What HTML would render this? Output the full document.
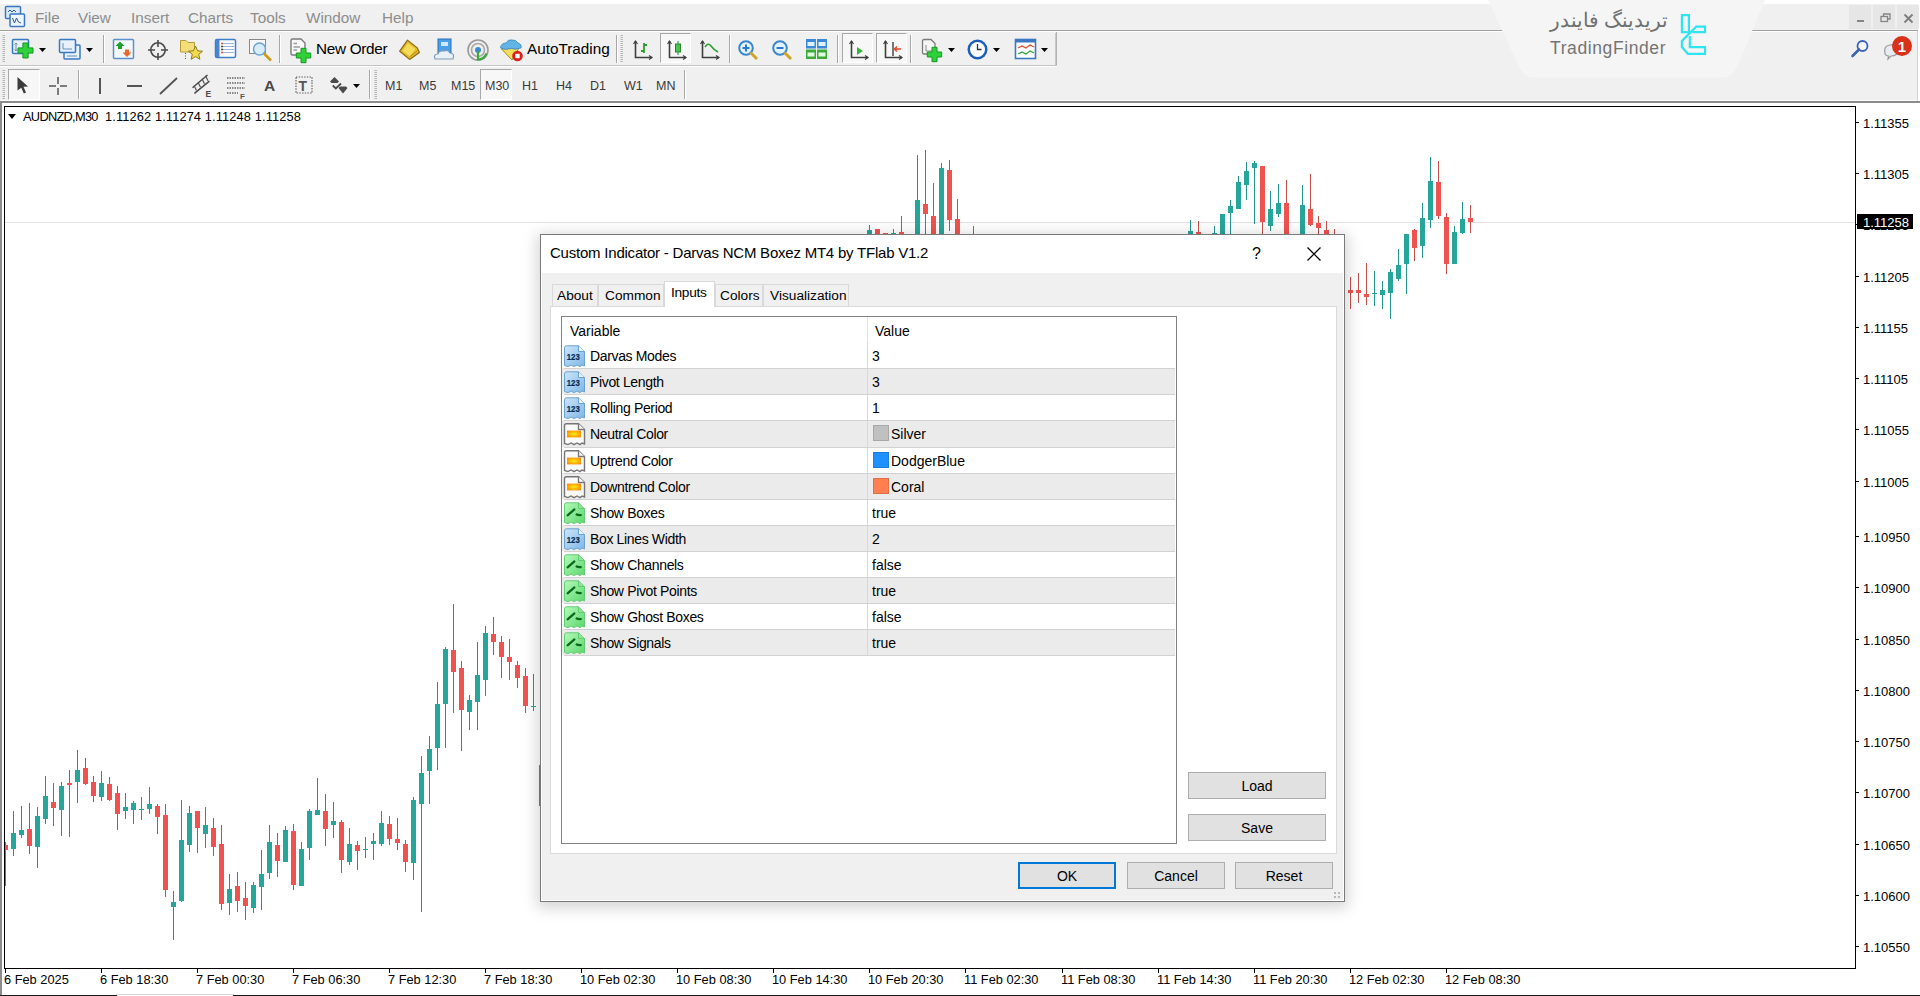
<!DOCTYPE html><html><head><meta charset="utf-8"><style>
*{margin:0;padding:0;box-sizing:border-box}
html,body{width:1920px;height:996px;overflow:hidden;background:#f0f0f0;font-family:"Liberation Sans", sans-serif;position:relative}
.a{position:absolute}
.t{position:absolute;white-space:nowrap;line-height:1}
</style></head><body>
<div class="a" style="left:0;top:0;width:1920px;height:4px;background:#fff"></div>
<div class="a" style="left:0;top:30px;width:1920px;height:1px;background:#a0a0a0"></div>
<div class="a" style="left:1056px;top:31px;width:1px;height:35px;background:#b4b4b4"></div>
<div class="a" style="left:0;top:31px;width:1920px;height:1px;background:#fff"></div>
<div class="a" style="left:0;top:65px;width:1057px;height:1px;background:#c4c4c4"></div>
<div class="a" style="left:0;top:66px;width:1057px;height:1px;background:#fff"></div>
<div class="a" style="left:0;top:100px;width:1920px;height:1px;background:#fafafa"></div>
<div class="a" style="left:0;top:101px;width:1920px;height:2px;background:#8c8c8c"></div>
<div class="a" style="left:0;top:103px;width:1920px;height:893px;background:#fff"></div>
<div class="a" style="left:0;top:101px;width:2px;height:895px;background:#8c8c8c"></div>
<div class="a" style="left:1917px;top:31px;width:1px;height:70px;background:#d4d4d4"></div>
<div class="a" style="left:1918px;top:0;width:2px;height:101px;background:#fff"></div>
<div class="a" style="left:0;top:995px;width:1920px;height:1px;background:#1a1a1a"></div>
<div class="a" style="left:116px;top:994px;width:118px;height:1px;background:#d8d8d8"></div>
<div class="a" style="left:117px;top:995px;width:116px;height:1px;background:#fafafa"></div>
<div class="a" style="left:4px;top:106px;width:1852px;height:863px;border:1px solid #000"></div>
<div class="a" style="left:5px;top:222px;width:1850px;height:1px;background:#e2e2e2"></div>
<div class="t" style="left:35px;top:10px;font-size:15.3px;color:#8d8d8d;">File</div>
<div class="t" style="left:78px;top:10px;font-size:15.3px;color:#8d8d8d;">View</div>
<div class="t" style="left:131px;top:10px;font-size:15.3px;color:#8d8d8d;">Insert</div>
<div class="t" style="left:188px;top:10px;font-size:15.3px;color:#8d8d8d;">Charts</div>
<div class="t" style="left:250px;top:10px;font-size:15.3px;color:#8d8d8d;">Tools</div>
<div class="t" style="left:306px;top:10px;font-size:15.3px;color:#8d8d8d;">Window</div>
<div class="t" style="left:382px;top:10px;font-size:15.3px;color:#8d8d8d;">Help</div>
<div class="a" style="left:8px;top:114px;width:0;height:0;border-left:4.5px solid transparent;border-right:4.5px solid transparent;border-top:5.5px solid #000"></div>
<div class="t" style="left:23px;top:111px;font-size:12.8px;color:#000;letter-spacing:-0.7px">AUDNZD,M30</div>
<div class="t" style="left:105px;top:111px;font-size:12.8px;color:#000;letter-spacing:0.13px">1.11262 1.11274 1.11248 1.11258</div>
<div class="a" style="left:1856px;top:122px;width:3px;height:1px;background:#000"></div>
<div class="t" style="left:1863px;top:117px;font-size:13px;color:#000;">1.11355</div>
<div class="a" style="left:1856px;top:173px;width:3px;height:1px;background:#000"></div>
<div class="t" style="left:1863px;top:168px;font-size:13px;color:#000;">1.11305</div>
<div class="a" style="left:1856px;top:224px;width:3px;height:1px;background:#000"></div>
<div class="a" style="left:1856px;top:276px;width:3px;height:1px;background:#000"></div>
<div class="t" style="left:1863px;top:271px;font-size:13px;color:#000;">1.11205</div>
<div class="a" style="left:1856px;top:327px;width:3px;height:1px;background:#000"></div>
<div class="t" style="left:1863px;top:322px;font-size:13px;color:#000;">1.11155</div>
<div class="a" style="left:1856px;top:378px;width:3px;height:1px;background:#000"></div>
<div class="t" style="left:1863px;top:373px;font-size:13px;color:#000;">1.11105</div>
<div class="a" style="left:1856px;top:429px;width:3px;height:1px;background:#000"></div>
<div class="t" style="left:1863px;top:424px;font-size:13px;color:#000;">1.11055</div>
<div class="a" style="left:1856px;top:481px;width:3px;height:1px;background:#000"></div>
<div class="t" style="left:1863px;top:476px;font-size:13px;color:#000;">1.11005</div>
<div class="a" style="left:1856px;top:536px;width:3px;height:1px;background:#000"></div>
<div class="t" style="left:1863px;top:531px;font-size:13px;color:#000;">1.10950</div>
<div class="a" style="left:1856px;top:587px;width:3px;height:1px;background:#000"></div>
<div class="t" style="left:1863px;top:582px;font-size:13px;color:#000;">1.10900</div>
<div class="a" style="left:1856px;top:639px;width:3px;height:1px;background:#000"></div>
<div class="t" style="left:1863px;top:634px;font-size:13px;color:#000;">1.10850</div>
<div class="a" style="left:1856px;top:690px;width:3px;height:1px;background:#000"></div>
<div class="t" style="left:1863px;top:685px;font-size:13px;color:#000;">1.10800</div>
<div class="a" style="left:1856px;top:741px;width:3px;height:1px;background:#000"></div>
<div class="t" style="left:1863px;top:736px;font-size:13px;color:#000;">1.10750</div>
<div class="a" style="left:1856px;top:792px;width:3px;height:1px;background:#000"></div>
<div class="t" style="left:1863px;top:787px;font-size:13px;color:#000;">1.10700</div>
<div class="a" style="left:1856px;top:844px;width:3px;height:1px;background:#000"></div>
<div class="t" style="left:1863px;top:839px;font-size:13px;color:#000;">1.10650</div>
<div class="a" style="left:1856px;top:895px;width:3px;height:1px;background:#000"></div>
<div class="t" style="left:1863px;top:890px;font-size:13px;color:#000;">1.10600</div>
<div class="a" style="left:1856px;top:946px;width:3px;height:1px;background:#000"></div>
<div class="t" style="left:1863px;top:941px;font-size:13px;color:#000;">1.10550</div>
<div class="t" style="left:1863px;top:219px;font-size:13px;color:#000;">1.11255</div>
<div class="a" style="left:1857px;top:214px;width:56px;height:15px;background:#000"></div>
<div class="t" style="left:1863px;top:216px;font-size:13px;color:#fff;">1.11258</div>
<div class="a" style="left:5px;top:969px;width:1px;height:4px;background:#000"></div>
<div class="t" style="left:4px;top:974px;font-size:12.8px;color:#000;">6 Feb 2025</div>
<div class="a" style="left:101px;top:969px;width:1px;height:4px;background:#000"></div>
<div class="t" style="left:100px;top:974px;font-size:12.8px;color:#000;">6 Feb 18:30</div>
<div class="a" style="left:197px;top:969px;width:1px;height:4px;background:#000"></div>
<div class="t" style="left:196px;top:974px;font-size:12.8px;color:#000;">7 Feb 00:30</div>
<div class="a" style="left:293px;top:969px;width:1px;height:4px;background:#000"></div>
<div class="t" style="left:292px;top:974px;font-size:12.8px;color:#000;">7 Feb 06:30</div>
<div class="a" style="left:389px;top:969px;width:1px;height:4px;background:#000"></div>
<div class="t" style="left:388px;top:974px;font-size:12.8px;color:#000;">7 Feb 12:30</div>
<div class="a" style="left:485px;top:969px;width:1px;height:4px;background:#000"></div>
<div class="t" style="left:484px;top:974px;font-size:12.8px;color:#000;">7 Feb 18:30</div>
<div class="a" style="left:581px;top:969px;width:1px;height:4px;background:#000"></div>
<div class="t" style="left:580px;top:974px;font-size:12.8px;color:#000;">10 Feb 02:30</div>
<div class="a" style="left:677px;top:969px;width:1px;height:4px;background:#000"></div>
<div class="t" style="left:676px;top:974px;font-size:12.8px;color:#000;">10 Feb 08:30</div>
<div class="a" style="left:773px;top:969px;width:1px;height:4px;background:#000"></div>
<div class="t" style="left:772px;top:974px;font-size:12.8px;color:#000;">10 Feb 14:30</div>
<div class="a" style="left:869px;top:969px;width:1px;height:4px;background:#000"></div>
<div class="t" style="left:868px;top:974px;font-size:12.8px;color:#000;">10 Feb 20:30</div>
<div class="a" style="left:965px;top:969px;width:1px;height:4px;background:#000"></div>
<div class="t" style="left:964px;top:974px;font-size:12.8px;color:#000;">11 Feb 02:30</div>
<div class="a" style="left:1062px;top:969px;width:1px;height:4px;background:#000"></div>
<div class="t" style="left:1061px;top:974px;font-size:12.8px;color:#000;">11 Feb 08:30</div>
<div class="a" style="left:1158px;top:969px;width:1px;height:4px;background:#000"></div>
<div class="t" style="left:1157px;top:974px;font-size:12.8px;color:#000;">11 Feb 14:30</div>
<div class="a" style="left:1254px;top:969px;width:1px;height:4px;background:#000"></div>
<div class="t" style="left:1253px;top:974px;font-size:12.8px;color:#000;">11 Feb 20:30</div>
<div class="a" style="left:1350px;top:969px;width:1px;height:4px;background:#000"></div>
<div class="t" style="left:1349px;top:974px;font-size:12.8px;color:#000;">12 Feb 02:30</div>
<div class="a" style="left:1446px;top:969px;width:1px;height:4px;background:#000"></div>
<div class="t" style="left:1445px;top:974px;font-size:12.8px;color:#000;">12 Feb 08:30</div>
<div class="a" style="left:5px;top:107px;width:1850px;height:861px;overflow:hidden"><svg class="a" style="left:-5px;top:-107px" width="1920" height="996" shape-rendering="crispEdges"><rect x="5" y="842" width="1" height="44" fill="#c44f4a"/>
<rect x="3" y="845" width="5" height="5" fill="#ef5350"/>
<rect x="13" y="811" width="1" height="45" fill="#23968c"/>
<rect x="11" y="833" width="5" height="16" fill="#26a69a"/>
<rect x="21" y="806" width="1" height="32" fill="#23968c"/>
<rect x="19" y="830" width="5" height="5" fill="#26a69a"/>
<rect x="29" y="803" width="1" height="51" fill="#c44f4a"/>
<rect x="27" y="829" width="5" height="17" fill="#ef5350"/>
<rect x="37" y="807" width="1" height="61" fill="#23968c"/>
<rect x="35" y="816" width="5" height="31" fill="#26a69a"/>
<rect x="45" y="776" width="1" height="48" fill="#23968c"/>
<rect x="43" y="796" width="5" height="23" fill="#26a69a"/>
<rect x="53" y="783" width="1" height="43" fill="#c44f4a"/>
<rect x="51" y="802" width="5" height="6" fill="#ef5350"/>
<rect x="61" y="782" width="1" height="54" fill="#23968c"/>
<rect x="59" y="786" width="5" height="24" fill="#26a69a"/>
<rect x="69" y="770" width="1" height="67" fill="#c44f4a"/>
<rect x="67" y="783" width="5" height="2" fill="#ef5350"/>
<rect x="77" y="750" width="1" height="53" fill="#23968c"/>
<rect x="75" y="770" width="5" height="12" fill="#26a69a"/>
<rect x="85" y="758" width="1" height="27" fill="#c44f4a"/>
<rect x="83" y="768" width="5" height="16" fill="#ef5350"/>
<rect x="93" y="776" width="1" height="26" fill="#c44f4a"/>
<rect x="91" y="782" width="5" height="14" fill="#ef5350"/>
<rect x="101" y="771" width="1" height="30" fill="#23968c"/>
<rect x="99" y="783" width="5" height="14" fill="#26a69a"/>
<rect x="109" y="777" width="1" height="24" fill="#c44f4a"/>
<rect x="107" y="784" width="5" height="16" fill="#ef5350"/>
<rect x="117" y="786" width="1" height="44" fill="#c44f4a"/>
<rect x="115" y="793" width="5" height="21" fill="#ef5350"/>
<rect x="125" y="793" width="1" height="26" fill="#23968c"/>
<rect x="123" y="807" width="5" height="4" fill="#26a69a"/>
<rect x="133" y="801" width="1" height="23" fill="#23968c"/>
<rect x="131" y="803" width="5" height="7" fill="#26a69a"/>
<rect x="141" y="797" width="1" height="23" fill="#23968c"/>
<rect x="139" y="809" width="5" height="1" fill="#26a69a"/>
<rect x="149" y="787" width="1" height="27" fill="#23968c"/>
<rect x="147" y="804" width="5" height="5" fill="#26a69a"/>
<rect x="157" y="804" width="1" height="30" fill="#c44f4a"/>
<rect x="155" y="806" width="5" height="11" fill="#ef5350"/>
<rect x="165" y="804" width="1" height="93" fill="#c44f4a"/>
<rect x="163" y="815" width="5" height="75" fill="#ef5350"/>
<rect x="173" y="891" width="1" height="49" fill="#23968c"/>
<rect x="171" y="902" width="5" height="5" fill="#26a69a"/>
<rect x="181" y="800" width="1" height="102" fill="#23968c"/>
<rect x="179" y="840" width="5" height="61" fill="#26a69a"/>
<rect x="189" y="806" width="1" height="46" fill="#23968c"/>
<rect x="187" y="813" width="5" height="32" fill="#26a69a"/>
<rect x="197" y="811" width="1" height="42" fill="#c44f4a"/>
<rect x="195" y="811" width="5" height="17" fill="#ef5350"/>
<rect x="205" y="807" width="1" height="41" fill="#23968c"/>
<rect x="203" y="825" width="5" height="9" fill="#26a69a"/>
<rect x="213" y="818" width="1" height="38" fill="#c44f4a"/>
<rect x="211" y="828" width="5" height="19" fill="#ef5350"/>
<rect x="221" y="825" width="1" height="85" fill="#c44f4a"/>
<rect x="219" y="844" width="5" height="60" fill="#ef5350"/>
<rect x="229" y="874" width="1" height="41" fill="#23968c"/>
<rect x="227" y="889" width="5" height="14" fill="#26a69a"/>
<rect x="237" y="872" width="1" height="40" fill="#c44f4a"/>
<rect x="235" y="886" width="5" height="15" fill="#ef5350"/>
<rect x="245" y="882" width="1" height="38" fill="#c44f4a"/>
<rect x="243" y="898" width="5" height="8" fill="#ef5350"/>
<rect x="253" y="882" width="1" height="31" fill="#23968c"/>
<rect x="251" y="885" width="5" height="23" fill="#26a69a"/>
<rect x="261" y="850" width="1" height="60" fill="#23968c"/>
<rect x="259" y="874" width="5" height="13" fill="#26a69a"/>
<rect x="269" y="825" width="1" height="54" fill="#23968c"/>
<rect x="267" y="842" width="5" height="31" fill="#26a69a"/>
<rect x="277" y="833" width="1" height="44" fill="#c44f4a"/>
<rect x="275" y="845" width="5" height="16" fill="#ef5350"/>
<rect x="285" y="826" width="1" height="36" fill="#23968c"/>
<rect x="283" y="830" width="5" height="32" fill="#26a69a"/>
<rect x="293" y="824" width="1" height="66" fill="#c44f4a"/>
<rect x="291" y="831" width="5" height="54" fill="#ef5350"/>
<rect x="301" y="842" width="1" height="44" fill="#23968c"/>
<rect x="299" y="849" width="5" height="37" fill="#26a69a"/>
<rect x="309" y="809" width="1" height="51" fill="#23968c"/>
<rect x="307" y="811" width="5" height="37" fill="#26a69a"/>
<rect x="317" y="778" width="1" height="37" fill="#23968c"/>
<rect x="315" y="810" width="5" height="5" fill="#26a69a"/>
<rect x="325" y="794" width="1" height="52" fill="#c44f4a"/>
<rect x="323" y="811" width="5" height="18" fill="#ef5350"/>
<rect x="333" y="802" width="1" height="36" fill="#23968c"/>
<rect x="331" y="821" width="5" height="4" fill="#26a69a"/>
<rect x="341" y="820" width="1" height="53" fill="#c44f4a"/>
<rect x="339" y="822" width="5" height="38" fill="#ef5350"/>
<rect x="349" y="828" width="1" height="37" fill="#23968c"/>
<rect x="347" y="844" width="5" height="18" fill="#26a69a"/>
<rect x="357" y="841" width="1" height="29" fill="#c44f4a"/>
<rect x="355" y="845" width="5" height="6" fill="#ef5350"/>
<rect x="365" y="837" width="1" height="21" fill="#23968c"/>
<rect x="363" y="849" width="5" height="1" fill="#26a69a"/>
<rect x="373" y="833" width="1" height="27" fill="#23968c"/>
<rect x="371" y="841" width="5" height="3" fill="#26a69a"/>
<rect x="381" y="811" width="1" height="35" fill="#23968c"/>
<rect x="379" y="823" width="5" height="21" fill="#26a69a"/>
<rect x="389" y="816" width="1" height="29" fill="#c44f4a"/>
<rect x="387" y="824" width="5" height="15" fill="#ef5350"/>
<rect x="397" y="818" width="1" height="32" fill="#c44f4a"/>
<rect x="395" y="839" width="5" height="4" fill="#ef5350"/>
<rect x="405" y="840" width="1" height="32" fill="#c44f4a"/>
<rect x="403" y="844" width="5" height="18" fill="#ef5350"/>
<rect x="413" y="797" width="1" height="83" fill="#23968c"/>
<rect x="411" y="800" width="5" height="63" fill="#26a69a"/>
<rect x="421" y="756" width="1" height="156" fill="#23968c"/>
<rect x="419" y="773" width="5" height="31" fill="#26a69a"/>
<rect x="429" y="736" width="1" height="68" fill="#23968c"/>
<rect x="427" y="749" width="5" height="22" fill="#26a69a"/>
<rect x="437" y="682" width="1" height="88" fill="#23968c"/>
<rect x="435" y="704" width="5" height="44" fill="#26a69a"/>
<rect x="445" y="647" width="1" height="101" fill="#23968c"/>
<rect x="443" y="649" width="5" height="55" fill="#26a69a"/>
<rect x="453" y="604" width="1" height="109" fill="#c44f4a"/>
<rect x="451" y="650" width="5" height="22" fill="#ef5350"/>
<rect x="461" y="661" width="1" height="90" fill="#c44f4a"/>
<rect x="459" y="668" width="5" height="42" fill="#ef5350"/>
<rect x="469" y="695" width="1" height="35" fill="#23968c"/>
<rect x="467" y="700" width="5" height="12" fill="#26a69a"/>
<rect x="477" y="642" width="1" height="88" fill="#23968c"/>
<rect x="475" y="675" width="5" height="27" fill="#26a69a"/>
<rect x="485" y="626" width="1" height="70" fill="#23968c"/>
<rect x="483" y="633" width="5" height="47" fill="#26a69a"/>
<rect x="493" y="617" width="1" height="38" fill="#c44f4a"/>
<rect x="491" y="634" width="5" height="8" fill="#ef5350"/>
<rect x="501" y="636" width="1" height="42" fill="#c44f4a"/>
<rect x="499" y="642" width="5" height="15" fill="#ef5350"/>
<rect x="509" y="639" width="1" height="41" fill="#c44f4a"/>
<rect x="507" y="657" width="5" height="5" fill="#ef5350"/>
<rect x="517" y="661" width="1" height="27" fill="#c44f4a"/>
<rect x="515" y="665" width="5" height="13" fill="#ef5350"/>
<rect x="525" y="668" width="1" height="45" fill="#c44f4a"/>
<rect x="523" y="676" width="5" height="30" fill="#ef5350"/>
<rect x="533" y="674" width="1" height="37" fill="#23968c"/>
<rect x="531" y="706" width="5" height="1" fill="#26a69a"/>
<rect x="541" y="765" width="1" height="41" fill="#23968c"/>
<rect x="539" y="765" width="5" height="41" fill="#26a69a"/>
<rect x="869" y="225" width="1" height="35" fill="#23968c"/>
<rect x="867" y="230" width="5" height="30" fill="#26a69a"/>
<rect x="877" y="229" width="1" height="31" fill="#c44f4a"/>
<rect x="875" y="229" width="5" height="31" fill="#ef5350"/>
<rect x="885" y="233" width="1" height="27" fill="#c44f4a"/>
<rect x="883" y="233" width="5" height="27" fill="#ef5350"/>
<rect x="893" y="229" width="1" height="31" fill="#23968c"/>
<rect x="891" y="233" width="5" height="27" fill="#26a69a"/>
<rect x="901" y="216" width="1" height="44" fill="#c44f4a"/>
<rect x="899" y="232" width="5" height="28" fill="#ef5350"/>
<rect x="917" y="155" width="1" height="105" fill="#23968c"/>
<rect x="915" y="200" width="5" height="60" fill="#26a69a"/>
<rect x="925" y="150" width="1" height="110" fill="#c44f4a"/>
<rect x="923" y="204" width="5" height="10" fill="#ef5350"/>
<rect x="933" y="183" width="1" height="77" fill="#c44f4a"/>
<rect x="931" y="216" width="5" height="44" fill="#ef5350"/>
<rect x="941" y="163" width="1" height="97" fill="#23968c"/>
<rect x="939" y="168" width="5" height="92" fill="#26a69a"/>
<rect x="949" y="160" width="1" height="71" fill="#c44f4a"/>
<rect x="947" y="170" width="5" height="50" fill="#ef5350"/>
<rect x="957" y="199" width="1" height="61" fill="#c44f4a"/>
<rect x="955" y="219" width="5" height="41" fill="#ef5350"/>
<rect x="973" y="226" width="1" height="34" fill="#c44f4a"/>
<rect x="971" y="260" width="5" height="1" fill="#ef5350"/>
<rect x="1190" y="220" width="1" height="40" fill="#23968c"/>
<rect x="1188" y="231" width="5" height="29" fill="#26a69a"/>
<rect x="1198" y="221" width="1" height="39" fill="#c44f4a"/>
<rect x="1196" y="232" width="5" height="28" fill="#ef5350"/>
<rect x="1214" y="226" width="1" height="34" fill="#23968c"/>
<rect x="1212" y="233" width="5" height="27" fill="#26a69a"/>
<rect x="1222" y="214" width="1" height="46" fill="#23968c"/>
<rect x="1220" y="214" width="5" height="46" fill="#26a69a"/>
<rect x="1230" y="200" width="1" height="60" fill="#23968c"/>
<rect x="1228" y="206" width="5" height="7" fill="#26a69a"/>
<rect x="1238" y="176" width="1" height="33" fill="#23968c"/>
<rect x="1236" y="182" width="5" height="27" fill="#26a69a"/>
<rect x="1246" y="162" width="1" height="38" fill="#23968c"/>
<rect x="1244" y="171" width="5" height="14" fill="#26a69a"/>
<rect x="1254" y="161" width="1" height="63" fill="#23968c"/>
<rect x="1252" y="163" width="5" height="5" fill="#26a69a"/>
<rect x="1262" y="166" width="1" height="94" fill="#c44f4a"/>
<rect x="1260" y="166" width="5" height="56" fill="#ef5350"/>
<rect x="1270" y="191" width="1" height="40" fill="#23968c"/>
<rect x="1268" y="209" width="5" height="17" fill="#26a69a"/>
<rect x="1278" y="184" width="1" height="33" fill="#23968c"/>
<rect x="1276" y="203" width="5" height="11" fill="#26a69a"/>
<rect x="1286" y="180" width="1" height="80" fill="#c44f4a"/>
<rect x="1284" y="203" width="5" height="57" fill="#ef5350"/>
<rect x="1302" y="185" width="1" height="75" fill="#23968c"/>
<rect x="1300" y="205" width="5" height="55" fill="#26a69a"/>
<rect x="1310" y="174" width="1" height="52" fill="#c44f4a"/>
<rect x="1308" y="209" width="5" height="16" fill="#ef5350"/>
<rect x="1318" y="216" width="1" height="44" fill="#c44f4a"/>
<rect x="1316" y="223" width="5" height="5" fill="#ef5350"/>
<rect x="1326" y="221" width="1" height="39" fill="#c44f4a"/>
<rect x="1324" y="230" width="5" height="30" fill="#ef5350"/>
<rect x="1334" y="229" width="1" height="31" fill="#c44f4a"/>
<rect x="1332" y="260" width="5" height="1" fill="#ef5350"/>
<rect x="1350" y="277" width="1" height="32" fill="#c44f4a"/>
<rect x="1348" y="290" width="5" height="3" fill="#ef5350"/>
<rect x="1358" y="273" width="1" height="30" fill="#c44f4a"/>
<rect x="1356" y="290" width="5" height="3" fill="#ef5350"/>
<rect x="1366" y="263" width="1" height="42" fill="#c44f4a"/>
<rect x="1364" y="294" width="5" height="3" fill="#ef5350"/>
<rect x="1374" y="271" width="1" height="35" fill="#23968c"/>
<rect x="1372" y="293" width="5" height="1" fill="#26a69a"/>
<rect x="1382" y="281" width="1" height="28" fill="#23968c"/>
<rect x="1380" y="290" width="5" height="5" fill="#26a69a"/>
<rect x="1390" y="269" width="1" height="50" fill="#23968c"/>
<rect x="1388" y="272" width="5" height="21" fill="#26a69a"/>
<rect x="1398" y="249" width="1" height="32" fill="#23968c"/>
<rect x="1396" y="265" width="5" height="14" fill="#26a69a"/>
<rect x="1406" y="234" width="1" height="60" fill="#23968c"/>
<rect x="1404" y="234" width="5" height="30" fill="#26a69a"/>
<rect x="1414" y="229" width="1" height="32" fill="#c44f4a"/>
<rect x="1412" y="230" width="5" height="18" fill="#ef5350"/>
<rect x="1422" y="203" width="1" height="55" fill="#23968c"/>
<rect x="1420" y="218" width="5" height="28" fill="#26a69a"/>
<rect x="1430" y="157" width="1" height="71" fill="#23968c"/>
<rect x="1428" y="181" width="5" height="39" fill="#26a69a"/>
<rect x="1438" y="161" width="1" height="58" fill="#c44f4a"/>
<rect x="1436" y="182" width="5" height="34" fill="#ef5350"/>
<rect x="1446" y="213" width="1" height="61" fill="#c44f4a"/>
<rect x="1444" y="217" width="5" height="47" fill="#ef5350"/>
<rect x="1454" y="226" width="1" height="38" fill="#23968c"/>
<rect x="1452" y="232" width="5" height="32" fill="#26a69a"/>
<rect x="1462" y="202" width="1" height="32" fill="#23968c"/>
<rect x="1460" y="219" width="5" height="14" fill="#26a69a"/>
<rect x="1470" y="205" width="1" height="28" fill="#c44f4a"/>
<rect x="1468" y="218" width="5" height="4" fill="#ef5350"/></svg></div>
<svg class="a" style="left:1488px;top:0" width="280" height="80"><path d="M0 0 L277 0 L252 60 Q246 77.5 234 77.5 L46 77.5 Q34 77.5 28 60 Z" fill="#f5f5f5"/></svg>
<svg class="a" style="left:2px;top:35px" width="3" height="28" viewBox="0 0 3 28"><rect x="0.5" y="0" width="2.5" height="1" fill="#b4b4b4"/><rect x="0.5" y="2" width="2.5" height="1" fill="#b4b4b4"/><rect x="0.5" y="4" width="2.5" height="1" fill="#b4b4b4"/><rect x="0.5" y="6" width="2.5" height="1" fill="#b4b4b4"/><rect x="0.5" y="8" width="2.5" height="1" fill="#b4b4b4"/><rect x="0.5" y="10" width="2.5" height="1" fill="#b4b4b4"/><rect x="0.5" y="12" width="2.5" height="1" fill="#b4b4b4"/><rect x="0.5" y="14" width="2.5" height="1" fill="#b4b4b4"/><rect x="0.5" y="16" width="2.5" height="1" fill="#b4b4b4"/><rect x="0.5" y="18" width="2.5" height="1" fill="#b4b4b4"/><rect x="0.5" y="20" width="2.5" height="1" fill="#b4b4b4"/><rect x="0.5" y="22" width="2.5" height="1" fill="#b4b4b4"/><rect x="0.5" y="24" width="2.5" height="1" fill="#b4b4b4"/><rect x="0.5" y="26" width="2.5" height="1" fill="#b4b4b4"/></svg>
<svg class="a" style="left:11px;top:37px" width="26" height="26" viewBox="0 0 26 26"><rect x="1.5" y="2.5" width="16" height="14" rx="1" fill="#e6f1fb" stroke="#3a78c2" stroke-width="1.5"/><path d="M5 6 V14 M3.5 7.5 L5 6 L6.5 7.5 M3.5 12.5 L5 14 L6.5 12.5" stroke="#6b8db5" stroke-width="1" fill="none"/><path d="M11.9 6.0 H17.1 V10.9 H22.0 V16.1 H17.1 V21.0 H11.9 V16.1 H7.0 V10.9 H11.9 Z" fill="#2fd13a" stroke="#139a1e" stroke-width="1"/></svg>
<svg class="a" style="left:39px;top:48px" width="8" height="5" viewBox="0 0 8 5"><path d="M0 0 L7 0 L3.5 4 Z" fill="#000"/></svg>
<svg class="a" style="left:58px;top:37px" width="26" height="26" viewBox="0 0 26 26"><rect x="6" y="8" width="16" height="14" rx="1" fill="#e6f1fb" stroke="#3a78c2" stroke-width="1.5"/><rect x="1.5" y="2.5" width="16" height="13" rx="1" fill="#e6f1fb" stroke="#3a78c2" stroke-width="1.5"/><path d="M5 6 V12 H14" stroke="#6b8db5" stroke-width="1" fill="none"/><path d="M9 19 H19" stroke="#6b8db5" stroke-width="1"/></svg>
<svg class="a" style="left:86px;top:48px" width="8" height="5" viewBox="0 0 8 5"><path d="M0 0 L7 0 L3.5 4 Z" fill="#000"/></svg>
<div class="a" style="left:103px;top:35px;width:1px;height:28px;background:#a8a8a8"></div><div class="a" style="left:104px;top:35px;width:1px;height:28px;background:#fff"></div>
<svg class="a" style="left:112px;top:37px" width="24" height="24" viewBox="0 0 24 24"><rect x="1.5" y="2.5" width="20" height="19" rx="1" fill="#f4f8fc" stroke="#5b8fd0" stroke-width="1.5"/><path d="M8 4.5 L12.5 9 H10 V12 H6 V9 H3.5 Z" fill="#1fa12a"/><path d="M15 20 L10.5 15.5 H13 V12.5 H17 V15.5 H19.5 Z" fill="#e86a2a"/></svg>
<svg class="a" style="left:147px;top:39px" width="22" height="22" viewBox="0 0 22 22"><circle cx="11" cy="11" r="7.2" fill="none" stroke="#4a4a4a" stroke-width="1.6"/><path d="M11 1 V8 M11 14 V21 M1 11 H8 M14 11 H21" stroke="#4a4a4a" stroke-width="1.6"/></svg>
<svg class="a" style="left:179px;top:37px" width="26" height="26" viewBox="0 0 26 26"><path d="M1.5 3.5 H7 L9 5.5 H15.5 V15 H1.5 Z" fill="#f3de78" stroke="#b39a3a" stroke-width="1"/><path d="M16.5 9 L18.6 13.8 L23.5 14.2 L19.7 17.4 L20.9 22.3 L16.5 19.6 L12.1 22.3 L13.3 17.4 L9.5 14.2 L14.4 13.8 Z" fill="#f2d94e" stroke="#8f7a1e" stroke-width="1"/><path d="M6.5 16 V23" stroke="#555" stroke-width="1" stroke-dasharray="1 1.5"/></svg>
<svg class="a" style="left:214px;top:38px" width="24" height="22" viewBox="0 0 24 22"><rect x="1.5" y="1.5" width="20" height="18" rx="1.5" fill="#fff" stroke="#3f7ecb" stroke-width="1.5"/><rect x="2" y="2" width="3.5" height="17" fill="#4a86d0"/><path d="M8 5.5 H20 M8 8.5 H20 M8 11.5 H20 M8 14.5 H20" stroke="#9cb6d6" stroke-width="1"/><circle cx="8" cy="5.5" r="0.9" fill="#e33"/><circle cx="8" cy="8.5" r="0.9" fill="#333"/><circle cx="8" cy="11.5" r="0.9" fill="#333"/><circle cx="8" cy="14.5" r="0.9" fill="#e33"/></svg>
<svg class="a" style="left:248px;top:37px" width="26" height="26" viewBox="0 0 26 26"><rect x="1.5" y="2.5" width="16" height="14" fill="#f8f8f8" stroke="#888" stroke-width="1"/><circle cx="11.5" cy="12" r="6" fill="#d8ecfa" stroke="#6aa6d8" stroke-width="1.5"/><path d="M16 16.5 L23 23.5" stroke="#c99b1e" stroke-width="2.6"/></svg>
<div class="a" style="left:279px;top:35px;width:1px;height:28px;background:#a8a8a8"></div><div class="a" style="left:280px;top:35px;width:1px;height:28px;background:#fff"></div>
<svg class="a" style="left:289px;top:37px" width="26" height="28" viewBox="0 0 26 28"><path d="M2 3.5 Q2 2 3.5 2 H12 L16 6 V18 H3.5 Q2 18 2 16.5 Z" fill="#f8f8f8" stroke="#7a7a7a" stroke-width="1.4"/><path d="M4.5 6.5 H8 M4.5 10 H11 M4.5 13 H8" stroke="#999" stroke-width="1.3"/><path d="M12.0 11.3 H17.0 V16.0 H21.7 V21.0 H17.0 V25.7 H12.0 V21.0 H7.3 V16.0 H12.0 Z" fill="#2fd13a" stroke="#139a1e" stroke-width="1"/></svg>
<div class="t" style="left:316px;top:41px;font-size:15.3px;color:#000;letter-spacing:-0.3px">New Order</div>
<svg class="a" style="left:398px;top:39px" width="24" height="23" viewBox="0 0 24 23"><path d="M1.7 12.2 L9.5 1.1 L19.3 8.9 L21.4 13.6 L11.6 20.4 Z" fill="#e3b92c" stroke="#8e6a12" stroke-width="1.2" stroke-linejoin="round"/><path d="M4.5 12 L10 4.2 L17.5 10 L12 17.5 Z" fill="#f3dc5a"/><path d="M12 17.5 L19.3 12" stroke="#b88a1c" stroke-width="1"/></svg>
<svg class="a" style="left:432px;top:37px" width="24" height="26" viewBox="0 0 24 26"><rect x="6" y="2" width="13" height="14" fill="#4aa0e8" stroke="#2a6fb8" stroke-width="1"/><rect x="9" y="5" width="7" height="4" fill="#cfe8fb"/><path d="M3 22 Q1 17 6 17 Q7 13 12 14 Q16 12 18 16 Q23 16 21 22 Z" fill="#e8f0f8" stroke="#7e9ab8" stroke-width="1.2"/></svg>
<svg class="a" style="left:466px;top:38px" width="24" height="24" viewBox="0 0 24 24"><circle cx="12" cy="12" r="10" fill="none" stroke="#9a9a9a" stroke-width="1.6"/><circle cx="12" cy="12" r="6.5" fill="none" stroke="#a8a8a8" stroke-width="1.6"/><circle cx="12" cy="12" r="3" fill="#3a8ad8"/><path d="M12 13 V21.5 A9.5 9.5 0 0 0 20.5 15.5" stroke="#3aa83a" stroke-width="2.2" fill="none"/></svg>
<svg class="a" style="left:499px;top:37px" width="26" height="26" viewBox="0 0 26 26"><path d="M2.5 12 L20.5 10 L13 23 Z" fill="#f2de5a" stroke="#a08a2a" stroke-width="1"/><path d="M1.5 11 Q2 6 7 6 Q9 2 13 3 Q17 2.5 19 6 Q23 7 22 11 Q17 13 12 11.5 Q6 13.5 1.5 11 Z" fill="#62b4e6" stroke="#3a86c0" stroke-width="0.8"/><circle cx="18.5" cy="19" r="5.3" fill="#d92020"/><rect x="16.3" y="16.8" width="4.4" height="4.4" fill="#fff"/></svg>
<div class="t" style="left:527px;top:41px;font-size:15.3px;color:#000;">AutoTrading</div>
<div class="a" style="left:616px;top:35px;width:1px;height:28px;background:#a8a8a8"></div><div class="a" style="left:617px;top:35px;width:1px;height:28px;background:#fff"></div>
<svg class="a" style="left:620px;top:35px" width="3" height="28" viewBox="0 0 3 28"><rect x="0.5" y="0" width="2.5" height="1" fill="#b4b4b4"/><rect x="0.5" y="2" width="2.5" height="1" fill="#b4b4b4"/><rect x="0.5" y="4" width="2.5" height="1" fill="#b4b4b4"/><rect x="0.5" y="6" width="2.5" height="1" fill="#b4b4b4"/><rect x="0.5" y="8" width="2.5" height="1" fill="#b4b4b4"/><rect x="0.5" y="10" width="2.5" height="1" fill="#b4b4b4"/><rect x="0.5" y="12" width="2.5" height="1" fill="#b4b4b4"/><rect x="0.5" y="14" width="2.5" height="1" fill="#b4b4b4"/><rect x="0.5" y="16" width="2.5" height="1" fill="#b4b4b4"/><rect x="0.5" y="18" width="2.5" height="1" fill="#b4b4b4"/><rect x="0.5" y="20" width="2.5" height="1" fill="#b4b4b4"/><rect x="0.5" y="22" width="2.5" height="1" fill="#b4b4b4"/><rect x="0.5" y="24" width="2.5" height="1" fill="#b4b4b4"/><rect x="0.5" y="26" width="2.5" height="1" fill="#b4b4b4"/></svg>
<svg class="a" style="left:632px;top:39px" width="22" height="22" viewBox="0 0 22 22"><path d="M3.5 2 V18.5 H20" stroke="#3f3f3f" stroke-width="1.6" fill="none"/><path d="M1.5 5 L3.5 2 L5.5 5" stroke="#3f3f3f" stroke-width="1.2" fill="none"/><path d="M17 16.5 L20 18.5 L17 20.5" stroke="#3f3f3f" stroke-width="1.2" fill="none"/><path d="M12 4 V14 M9 12 H12 M12 6 H15" stroke="#2aa02e" stroke-width="1.8" fill="none"/></svg>
<div class="a" style="left:660px;top:33px;width:31px;height:30px;background:#f7f7f7;border-top:1px solid #a8a8a8;border-left:1px solid #a8a8a8;border-right:1px solid #fff;border-bottom:1px solid #fff"></div>
<svg class="a" style="left:666px;top:39px" width="22" height="22" viewBox="0 0 22 22"><path d="M3.5 2 V18.5 H20" stroke="#3f3f3f" stroke-width="1.6" fill="none"/><path d="M1.5 5 L3.5 2 L5.5 5" stroke="#3f3f3f" stroke-width="1.2" fill="none"/><path d="M17 16.5 L20 18.5 L17 20.5" stroke="#3f3f3f" stroke-width="1.2" fill="none"/><path d="M12 2 V16" stroke="#2a8a2e" stroke-width="1"/><rect x="9.5" y="5" width="5" height="8" fill="#4bc14f" stroke="#2a8a2e" stroke-width="1"/></svg>
<svg class="a" style="left:699px;top:39px" width="22" height="22" viewBox="0 0 22 22"><path d="M3.5 2 V18.5 H20" stroke="#3f3f3f" stroke-width="1.6" fill="none"/><path d="M1.5 5 L3.5 2 L5.5 5" stroke="#3f3f3f" stroke-width="1.2" fill="none"/><path d="M17 16.5 L20 18.5 L17 20.5" stroke="#3f3f3f" stroke-width="1.2" fill="none"/><path d="M6 8 Q9 3 12 7 T19 13" stroke="#2aa02e" stroke-width="1.6" fill="none"/></svg>
<div class="a" style="left:729px;top:35px;width:1px;height:28px;background:#a8a8a8"></div><div class="a" style="left:730px;top:35px;width:1px;height:28px;background:#fff"></div>
<svg class="a" style="left:737px;top:39px" width="22" height="22" viewBox="0 0 22 22"><circle cx="9" cy="9" r="6.8" fill="#e4f2fd" stroke="#3a86d0" stroke-width="2"/><path d="M13.5 13.5 L20 20" stroke="#d2a32a" stroke-width="3"/><path d="M5.5 9 H12.5" stroke="#2a7ad0" stroke-width="2"/><path d="M9 5.5 V12.5" stroke="#2a7ad0" stroke-width="2"/></svg>
<svg class="a" style="left:771px;top:39px" width="22" height="22" viewBox="0 0 22 22"><circle cx="9" cy="9" r="6.8" fill="#e4f2fd" stroke="#3a86d0" stroke-width="2"/><path d="M13.5 13.5 L20 20" stroke="#d2a32a" stroke-width="3"/><path d="M5.5 9 H12.5" stroke="#2a7ad0" stroke-width="2"/></svg>
<svg class="a" style="left:805px;top:38px" width="24" height="22" viewBox="0 0 24 22"><rect x="1" y="1" width="10" height="9.5" fill="#3a8ad8"/><rect x="12" y="1" width="10" height="9.5" fill="#3a8ad8"/><rect x="1" y="11.5" width="10" height="9.5" fill="#3aaa3a"/><rect x="12" y="11.5" width="10" height="9.5" fill="#3aaa3a"/><rect x="2.5" y="4" width="7" height="4" fill="#dff0ff"/><rect x="13.5" y="4" width="7" height="4" fill="#dff0ff"/><rect x="2.5" y="14.5" width="7" height="4" fill="#dff8df"/><rect x="13.5" y="14.5" width="7" height="4" fill="#dff8df"/></svg>
<div class="a" style="left:837px;top:35px;width:1px;height:28px;background:#a8a8a8"></div><div class="a" style="left:838px;top:35px;width:1px;height:28px;background:#fff"></div>
<div class="a" style="left:842px;top:33px;width:31px;height:30px;background:#f7f7f7;border-top:1px solid #a8a8a8;border-left:1px solid #a8a8a8;border-right:1px solid #fff;border-bottom:1px solid #fff"></div>
<svg class="a" style="left:848px;top:39px" width="22" height="22" viewBox="0 0 22 22"><path d="M3.5 2 V18.5 H20" stroke="#3f3f3f" stroke-width="1.6" fill="none"/><path d="M1.5 5 L3.5 2 L5.5 5" stroke="#3f3f3f" stroke-width="1.2" fill="none"/><path d="M17 16.5 L20 18.5 L17 20.5" stroke="#3f3f3f" stroke-width="1.2" fill="none"/><path d="M9 8 L15 12 L9 16 Z" fill="#3ab53e"/></svg>
<div class="a" style="left:876px;top:33px;width:31px;height:30px;background:#f7f7f7;border-top:1px solid #a8a8a8;border-left:1px solid #a8a8a8;border-right:1px solid #fff;border-bottom:1px solid #fff"></div>
<svg class="a" style="left:882px;top:39px" width="22" height="22" viewBox="0 0 22 22"><path d="M3.5 2 V18.5 H20" stroke="#3f3f3f" stroke-width="1.6" fill="none"/><path d="M1.5 5 L3.5 2 L5.5 5" stroke="#3f3f3f" stroke-width="1.2" fill="none"/><path d="M17 16.5 L20 18.5 L17 20.5" stroke="#3f3f3f" stroke-width="1.2" fill="none"/><path d="M11 3 V17" stroke="#3f3f3f" stroke-width="1.4"/><path d="M19 10 H13 M15 7.5 L12.5 10 L15 12.5" stroke="#e04a2a" stroke-width="1.6" fill="none"/></svg>
<div class="a" style="left:910px;top:35px;width:1px;height:28px;background:#a8a8a8"></div><div class="a" style="left:911px;top:35px;width:1px;height:28px;background:#fff"></div>
<svg class="a" style="left:920px;top:37px" width="26" height="26" viewBox="0 0 26 26"><path d="M2.5 4 Q2.5 2.5 4 2.5 H11 L15 6.5 V17 H4 Q2.5 17 2.5 15.5 Z" fill="#f6f6f6" stroke="#7a7a7a" stroke-width="1.3"/><path d="M6 8 V14 H12" stroke="#888" stroke-width="1" fill="none"/><path d="M12.0 10.3 H17.0 V15.0 H21.7 V20.0 H17.0 V24.7 H12.0 V20.0 H7.3 V15.0 H12.0 Z" fill="#2fd13a" stroke="#139a1e" stroke-width="1"/></svg>
<svg class="a" style="left:948px;top:48px" width="8" height="5" viewBox="0 0 8 5"><path d="M0 0 L7 0 L3.5 4 Z" fill="#000"/></svg>
<svg class="a" style="left:966px;top:38px" width="24" height="24" viewBox="0 0 24 24"><circle cx="11.5" cy="11.5" r="10" fill="#1d5fb8"/><circle cx="11.5" cy="11.5" r="7.5" fill="#fff"/><path d="M11.5 6 V11.5 H15.5" stroke="#333" stroke-width="1.3" fill="none"/></svg>
<svg class="a" style="left:993px;top:48px" width="8" height="5" viewBox="0 0 8 5"><path d="M0 0 L7 0 L3.5 4 Z" fill="#000"/></svg>
<svg class="a" style="left:1014px;top:38px" width="24" height="22" viewBox="0 0 24 22"><rect x="1.5" y="1.5" width="20" height="19" fill="#fff" stroke="#3a78c2" stroke-width="1.6"/><rect x="1.5" y="1.5" width="20" height="3" fill="#3a78c2"/><path d="M4 10 L8 8 L12 10 L16 7 L20 9" stroke="#e24a2a" stroke-width="1.2" fill="none"/><path d="M4 16 L8 14 L12 16 L16 13 L20 15" stroke="#2aa83a" stroke-width="1.2" fill="none"/></svg>
<svg class="a" style="left:1041px;top:48px" width="8" height="5" viewBox="0 0 8 5"><path d="M0 0 L7 0 L3.5 4 Z" fill="#000"/></svg>
<div class="a" style="left:1055px;top:33px;width:1px;height:32px;background:#c8c8c8"></div>
<svg class="a" style="left:2px;top:70px" width="3" height="29" viewBox="0 0 3 29"><rect x="0.5" y="0" width="2.5" height="1" fill="#b4b4b4"/><rect x="0.5" y="2" width="2.5" height="1" fill="#b4b4b4"/><rect x="0.5" y="4" width="2.5" height="1" fill="#b4b4b4"/><rect x="0.5" y="6" width="2.5" height="1" fill="#b4b4b4"/><rect x="0.5" y="8" width="2.5" height="1" fill="#b4b4b4"/><rect x="0.5" y="10" width="2.5" height="1" fill="#b4b4b4"/><rect x="0.5" y="12" width="2.5" height="1" fill="#b4b4b4"/><rect x="0.5" y="14" width="2.5" height="1" fill="#b4b4b4"/><rect x="0.5" y="16" width="2.5" height="1" fill="#b4b4b4"/><rect x="0.5" y="18" width="2.5" height="1" fill="#b4b4b4"/><rect x="0.5" y="20" width="2.5" height="1" fill="#b4b4b4"/><rect x="0.5" y="22" width="2.5" height="1" fill="#b4b4b4"/><rect x="0.5" y="24" width="2.5" height="1" fill="#b4b4b4"/><rect x="0.5" y="26" width="2.5" height="1" fill="#b4b4b4"/><rect x="0.5" y="28" width="2.5" height="1" fill="#b4b4b4"/></svg>
<div class="a" style="left:8px;top:69px;width:32px;height:31px;background:#f7f7f7;border-top:1px solid #a8a8a8;border-left:1px solid #a8a8a8;border-right:1px solid #fff;border-bottom:1px solid #fff"></div>
<svg class="a" style="left:16px;top:76px" width="14" height="18" viewBox="0 0 14 18"><path d="M1.5 1 L12 10.5 L7.5 10.8 L10 16.5 L7.8 17.5 L5.3 11.8 L1.5 14.5 Z" fill="#3c3c3c"/></svg>
<svg class="a" style="left:47px;top:75px" width="22" height="22" viewBox="0 0 22 22"><path d="M11 2 V9 M11 13 V20 M2 11 H9 M13 11 H20" stroke="#555" stroke-width="1.5"/></svg>
<div class="a" style="left:78px;top:70px;width:1px;height:29px;background:#a8a8a8"></div><div class="a" style="left:79px;top:70px;width:1px;height:29px;background:#fff"></div>
<svg class="a" style="left:94px;top:75px" width="12" height="22" viewBox="0 0 12 22"><path d="M6 3 V19" stroke="#555" stroke-width="2"/></svg>
<svg class="a" style="left:125px;top:75px" width="20" height="22" viewBox="0 0 20 22"><path d="M2 11 H17" stroke="#555" stroke-width="2"/></svg>
<svg class="a" style="left:158px;top:75px" width="22" height="22" viewBox="0 0 22 22"><path d="M2 19 L19 3" stroke="#555" stroke-width="1.8"/></svg>
<svg class="a" style="left:190px;top:74px" width="26" height="26" viewBox="0 0 26 26"><path d="M2.5 13.7 L17.5 1 M4.4 19.3 L19.4 7.1" stroke="#4a4a4a" stroke-width="1.5"/><path d="M4 11.5 L6.5 16.5 M8 8.2 L10.5 13.2 M12 4.8 L14.5 9.8 M15.5 1.8 L18 6.8" stroke="#555" stroke-width="1.2"/><text x="15.5" y="23" font-family="Liberation Sans" font-weight="bold" font-size="8.5" fill="#4a4a4a">E</text></svg>
<svg class="a" style="left:225px;top:74px" width="26" height="26" viewBox="0 0 26 26"><path d="M2 4 H20 M2 9 H20 M2 14 H20 M2 19 H13" stroke="#666" stroke-width="1.4" stroke-dasharray="1.5 1"/><text x="15" y="25" font-family="Liberation Sans" font-weight="bold" font-size="8" fill="#555">F</text></svg>
<div class="t" style="left:264px;top:78px;font-size:15.5px;color:#4a4a4a;font-weight:bold">A</div>
<svg class="a" style="left:294px;top:75px" width="22" height="22" viewBox="0 0 22 22"><rect x="2" y="2" width="16" height="16" fill="none" stroke="#666" stroke-width="1.2" stroke-dasharray="1.5 1.2"/><text x="4.5" y="16" font-family="Liberation Sans" font-weight="bold" font-size="14" fill="#555">T</text></svg>
<svg class="a" style="left:328px;top:75px" width="22" height="22" viewBox="0 0 22 22"><path d="M2 6.5 L6.5 2 L11 6.5 L9.5 8 L3.5 8 Z" fill="#4a4a4a"/><path d="M4.8 10.5 L7.8 13.5 L13 8.5" stroke="#4a4a4a" stroke-width="1.8" fill="none"/><path d="M10.5 13 L12 11.5 L18 11.5 L19.5 13 L15 18.5 Z" fill="#4a4a4a"/></svg>
<svg class="a" style="left:353px;top:84px" width="8" height="5" viewBox="0 0 8 5"><path d="M0 0 L7 0 L3.5 4 Z" fill="#000"/></svg>
<div class="a" style="left:369px;top:70px;width:1px;height:29px;background:#a8a8a8"></div><div class="a" style="left:370px;top:70px;width:1px;height:29px;background:#fff"></div>
<svg class="a" style="left:374px;top:70px" width="3" height="29" viewBox="0 0 3 29"><rect x="0.5" y="0" width="2.5" height="1" fill="#b4b4b4"/><rect x="0.5" y="2" width="2.5" height="1" fill="#b4b4b4"/><rect x="0.5" y="4" width="2.5" height="1" fill="#b4b4b4"/><rect x="0.5" y="6" width="2.5" height="1" fill="#b4b4b4"/><rect x="0.5" y="8" width="2.5" height="1" fill="#b4b4b4"/><rect x="0.5" y="10" width="2.5" height="1" fill="#b4b4b4"/><rect x="0.5" y="12" width="2.5" height="1" fill="#b4b4b4"/><rect x="0.5" y="14" width="2.5" height="1" fill="#b4b4b4"/><rect x="0.5" y="16" width="2.5" height="1" fill="#b4b4b4"/><rect x="0.5" y="18" width="2.5" height="1" fill="#b4b4b4"/><rect x="0.5" y="20" width="2.5" height="1" fill="#b4b4b4"/><rect x="0.5" y="22" width="2.5" height="1" fill="#b4b4b4"/><rect x="0.5" y="24" width="2.5" height="1" fill="#b4b4b4"/><rect x="0.5" y="26" width="2.5" height="1" fill="#b4b4b4"/><rect x="0.5" y="28" width="2.5" height="1" fill="#b4b4b4"/></svg>
<div class="a" style="left:480px;top:69px;width:32px;height:31px;background:#f7f7f7;border-top:1px solid #a8a8a8;border-left:1px solid #a8a8a8;border-right:1px solid #fff;border-bottom:1px solid #fff"></div>
<div class="t" style="left:385px;top:80px;font-size:12.5px;color:#3a3a3a;">M1</div>
<div class="t" style="left:419px;top:80px;font-size:12.5px;color:#3a3a3a;">M5</div>
<div class="t" style="left:451px;top:80px;font-size:12.5px;color:#3a3a3a;">M15</div>
<div class="t" style="left:485px;top:80px;font-size:12.5px;color:#3a3a3a;">M30</div>
<div class="t" style="left:522px;top:80px;font-size:12.5px;color:#3a3a3a;">H1</div>
<div class="t" style="left:556px;top:80px;font-size:12.5px;color:#3a3a3a;">H4</div>
<div class="t" style="left:590px;top:80px;font-size:12.5px;color:#3a3a3a;">D1</div>
<div class="t" style="left:624px;top:80px;font-size:12.5px;color:#3a3a3a;">W1</div>
<div class="t" style="left:656px;top:80px;font-size:12.5px;color:#3a3a3a;">MN</div>
<div class="a" style="left:684px;top:70px;width:1px;height:29px;background:#a8a8a8"></div><div class="a" style="left:685px;top:70px;width:1px;height:29px;background:#fff"></div>
<div class="a" style="left:1849px;top:5px;width:22px;height:24px;background:#e6e6e6"></div>
<div class="a" style="left:1873px;top:5px;width:22px;height:24px;background:#e6e6e6"></div>
<div class="a" style="left:1897px;top:5px;width:22px;height:24px;background:#e6e6e6"></div>
<div class="a" style="left:1857px;top:20px;width:7px;height:2px;background:#858585"></div>
<svg class="a" style="left:1880px;top:12px" width="12" height="12" viewBox="0 0 12 12"><rect x="1" y="4.5" width="6.5" height="5" fill="none" stroke="#858585" stroke-width="1.3"/><path d="M3.5 4.5 V2 H10 V7 H7.5" fill="none" stroke="#858585" stroke-width="1.3"/></svg>
<svg class="a" style="left:1903px;top:13px" width="11" height="11" viewBox="0 0 11 11"><path d="M1.5 1.5 L9.5 9.5 M9.5 1.5 L1.5 9.5" stroke="#7c7c7c" stroke-width="1.8"/></svg>
<svg class="a" style="left:1850px;top:38px" width="22" height="22" viewBox="0 0 22 22"><circle cx="12.5" cy="8" r="5" fill="#f4f6fb" stroke="#3a62b8" stroke-width="1.8"/><path d="M9 11.5 L2.5 18" stroke="#3a62b8" stroke-width="2.6" stroke-linecap="round"/></svg>
<svg class="a" style="left:1880px;top:32px" width="36" height="30" viewBox="0 0 36 30"><path d="M5 22 Q3 14 10 13 Q17 12 18 18 Q18 24 11 24 L8 27 L8.5 24 Q6 24 5 22 Z" fill="#e6ecf2" stroke="#9a9a9a" stroke-width="1.2"/><circle cx="22" cy="14" r="10" fill="#d93218"/><text x="22" y="19.5" text-anchor="middle" font-family="Liberation Sans" font-weight="bold" font-size="15" fill="#fff">1</text></svg>
<div class="t" style="left:1550px;top:40px;font-size:17.5px;color:#747474;letter-spacing:0.6px">TradingFinder</div>
<div class="t" style="left:1550px;top:11px;font-size:19.5px;color:#707070;">&#1578;&#1585;&#1740;&#1583;&#1740;&#1606;&#1711; &#1601;&#1575;&#1740;&#1606;&#1583;&#1585;</div>
<svg class="a" style="left:1670px;top:5px" width="50" height="60" viewBox="0 0 50 60"><g fill="none" stroke="#2ee4f2" stroke-width="2.2"><rect x="11.9" y="10.1" width="7" height="17.1"/><path d="M22.5 27.2 H35 V21.6 H26.2 L11.9 36 V42 L18 48.9 H35 V42.1 H19.8 V31"/></g></svg>
<svg class="a" style="left:4px;top:5px" width="22" height="23" viewBox="0 0 22 23"><rect x="1.5" y="1.5" width="15" height="12" rx="1" fill="#dceaf8" stroke="#3a78c2" stroke-width="1.5"/><rect x="6" y="9" width="14.5" height="12.5" rx="1" fill="#eef5fc" stroke="#3a78c2" stroke-width="1.5"/><path d="M4 7 L6 5 L8 7 L10 5 L12 7" stroke="#2a5a9a" stroke-width="1" fill="none"/><path d="M8.5 13 L10.5 18 L12.5 13 L14.5 17 L17 18" stroke="#2a5a9a" stroke-width="1" fill="none"/></svg>
<div class="a" style="left:540px;top:234px;width:805px;height:668px;background:#f0f0f0;border:1px solid #7a7a7a;box-shadow:inset 0 0 0 1px #fff, 0 3px 14px 3px rgba(0,0,0,0.17)"></div>
<div class="a" style="left:541px;top:235px;width:803px;height:38px;background:#fff"></div>
<div class="t" style="left:550px;top:245px;font-size:15px;color:#000;letter-spacing:-0.22px">Custom Indicator - Darvas NCM Boxez MT4 by TFlab V1.2</div>
<div class="t" style="left:1252px;top:246px;font-size:16px;color:#000;">?</div>
<svg class="a" style="left:1307px;top:247px" width="14" height="14"><path d="M0.5 0.5 L13.5 13.5 M13.5 0.5 L0.5 13.5" stroke="#000" stroke-width="1.25"/></svg>
<div class="a" style="left:550px;top:306px;width:787px;height:548px;background:#fff;border:1px solid #d9d9d9"></div>
<div class="a" style="left:552px;top:284px;width:46px;height:22px;background:#f0f0f0;border:1px solid #d9d9d9;border-bottom:none"></div>
<div class="t" style="left:557px;top:289px;font-size:13.7px;color:#000;">About</div>
<div class="a" style="left:598px;top:284px;width:66px;height:22px;background:#f0f0f0;border:1px solid #d9d9d9;border-bottom:none"></div>
<div class="t" style="left:605px;top:289px;font-size:13.7px;color:#000;">Common</div>
<div class="a" style="left:664px;top:281px;width:51px;height:26px;background:#fff;border:1px solid #d9d9d9;border-bottom:none"></div>
<div class="t" style="left:671px;top:286px;font-size:13.7px;color:#000;letter-spacing:-0.3px">Inputs</div>
<div class="a" style="left:715px;top:284px;width:48px;height:22px;background:#f0f0f0;border:1px solid #d9d9d9;border-bottom:none"></div>
<div class="t" style="left:720px;top:289px;font-size:13.7px;color:#000;">Colors</div>
<div class="a" style="left:763px;top:284px;width:86px;height:22px;background:#f0f0f0;border:1px solid #d9d9d9;border-bottom:none"></div>
<div class="t" style="left:770px;top:289px;font-size:13.7px;color:#000;">Visualization</div>
<div class="a" style="left:561px;top:316px;width:616px;height:528px;background:#fff;border:1px solid #828282"></div>
<div class="t" style="left:570px;top:324px;font-size:14px;color:#000;">Variable</div>
<div class="t" style="left:875px;top:324px;font-size:14px;color:#000;">Value</div>
<div class="a" style="left:867px;top:317px;width:1px;height:339px;background:#e3e3e3"></div>
<div class="a" style="left:562px;top:342px;width:613px;height:26px;background:#fff"></div>
<div class="a" style="left:867px;top:342px;width:1px;height:26px;background:#d8d8d8"></div>
<svg class="a" style="left:563px;top:345px" width="23" height="23" viewBox="0 0 23 23"><defs><linearGradient id="gb" x1="0" y1="0" x2="1" y2="1"><stop offset="0" stop-color="#cde6fa"/><stop offset="1" stop-color="#7db6e6"/></linearGradient></defs><path d="M1.5 2.8 Q1.5 0.8 3.5 0.8 L15.5 0.8 L21.5 6.5 L21.5 21 L19 20 L17 21.6 L14 20 L11 21.6 L8 20 L5 21.6 L1.5 20.5 Z" fill="url(#gb)" stroke="#6aa2d4" stroke-width="1"/><path d="M15.5 0.8 L15.5 6.5 L21.5 6.5" fill="#e8f4fd" stroke="#6aa2d4" stroke-width="1"/><text transform="translate(3.8 15.2) scale(0.82 1)" font-family="Liberation Sans" font-weight="bold" font-size="9.5" fill="#0b2a52" stroke="#0b2a52" stroke-width="0.2">123</text></svg>
<div class="t" style="left:590px;top:349px;font-size:14px;color:#000;letter-spacing:-0.35px">Darvas Modes</div>
<div class="t" style="left:872px;top:349px;font-size:14px;color:#000;">3</div>
<div class="a" style="left:562px;top:368px;width:613px;height:26px;background:#ebebeb"></div>
<div class="a" style="left:867px;top:368px;width:1px;height:26px;background:#d8d8d8"></div>
<svg class="a" style="left:563px;top:371px" width="23" height="23" viewBox="0 0 23 23"><defs><linearGradient id="gb" x1="0" y1="0" x2="1" y2="1"><stop offset="0" stop-color="#cde6fa"/><stop offset="1" stop-color="#7db6e6"/></linearGradient></defs><path d="M1.5 2.8 Q1.5 0.8 3.5 0.8 L15.5 0.8 L21.5 6.5 L21.5 21 L19 20 L17 21.6 L14 20 L11 21.6 L8 20 L5 21.6 L1.5 20.5 Z" fill="url(#gb)" stroke="#6aa2d4" stroke-width="1"/><path d="M15.5 0.8 L15.5 6.5 L21.5 6.5" fill="#e8f4fd" stroke="#6aa2d4" stroke-width="1"/><text transform="translate(3.8 15.2) scale(0.82 1)" font-family="Liberation Sans" font-weight="bold" font-size="9.5" fill="#0b2a52" stroke="#0b2a52" stroke-width="0.2">123</text></svg>
<div class="t" style="left:590px;top:375px;font-size:14px;color:#000;letter-spacing:-0.35px">Pivot Length</div>
<div class="t" style="left:872px;top:375px;font-size:14px;color:#000;">3</div>
<div class="a" style="left:562px;top:394px;width:613px;height:26px;background:#fff"></div>
<div class="a" style="left:867px;top:394px;width:1px;height:26px;background:#d8d8d8"></div>
<svg class="a" style="left:563px;top:397px" width="23" height="23" viewBox="0 0 23 23"><defs><linearGradient id="gb" x1="0" y1="0" x2="1" y2="1"><stop offset="0" stop-color="#cde6fa"/><stop offset="1" stop-color="#7db6e6"/></linearGradient></defs><path d="M1.5 2.8 Q1.5 0.8 3.5 0.8 L15.5 0.8 L21.5 6.5 L21.5 21 L19 20 L17 21.6 L14 20 L11 21.6 L8 20 L5 21.6 L1.5 20.5 Z" fill="url(#gb)" stroke="#6aa2d4" stroke-width="1"/><path d="M15.5 0.8 L15.5 6.5 L21.5 6.5" fill="#e8f4fd" stroke="#6aa2d4" stroke-width="1"/><text transform="translate(3.8 15.2) scale(0.82 1)" font-family="Liberation Sans" font-weight="bold" font-size="9.5" fill="#0b2a52" stroke="#0b2a52" stroke-width="0.2">123</text></svg>
<div class="t" style="left:590px;top:401px;font-size:14px;color:#000;letter-spacing:-0.35px">Rolling Period</div>
<div class="t" style="left:872px;top:401px;font-size:14px;color:#000;">1</div>
<div class="a" style="left:562px;top:420px;width:613px;height:27px;background:#ebebeb"></div>
<div class="a" style="left:867px;top:420px;width:1px;height:27px;background:#d8d8d8"></div>
<svg class="a" style="left:563px;top:423px" width="23" height="23" viewBox="0 0 23 23"><defs><radialGradient id="go" cx="0.5" cy="0.5" r="0.6"><stop offset="0" stop-color="#ffef10"/><stop offset="1" stop-color="#ff8800"/></radialGradient></defs><path d="M1.5 2.8 Q1.5 0.8 3.5 0.8 L15.5 0.8 L21.5 6.5 L21.5 21 L19 20 L17 21.6 L14 20 L11 21.6 L8 20 L5 21.6 L1.5 20.5 Z" fill="#fafafa" stroke="#767676" stroke-width="1.4"/><path d="M15.5 0.8 L15.5 6.5 L21.5 6.5" fill="#fff" stroke="#767676" stroke-width="1.4"/><rect x="4" y="7.6" width="14" height="6.8" fill="url(#go)"/></svg>
<div class="t" style="left:590px;top:427px;font-size:14px;color:#000;letter-spacing:-0.35px">Neutral Color</div>
<div class="a" style="left:873px;top:425px;width:16px;height:16px;background:#c0c0c0;border:1px solid rgba(0,0,0,0.12)"></div>
<div class="t" style="left:891px;top:427px;font-size:14px;color:#000;">Silver</div>
<div class="a" style="left:562px;top:447px;width:613px;height:26px;background:#fff"></div>
<div class="a" style="left:867px;top:447px;width:1px;height:26px;background:#d8d8d8"></div>
<svg class="a" style="left:563px;top:450px" width="23" height="23" viewBox="0 0 23 23"><defs><radialGradient id="go" cx="0.5" cy="0.5" r="0.6"><stop offset="0" stop-color="#ffef10"/><stop offset="1" stop-color="#ff8800"/></radialGradient></defs><path d="M1.5 2.8 Q1.5 0.8 3.5 0.8 L15.5 0.8 L21.5 6.5 L21.5 21 L19 20 L17 21.6 L14 20 L11 21.6 L8 20 L5 21.6 L1.5 20.5 Z" fill="#fafafa" stroke="#767676" stroke-width="1.4"/><path d="M15.5 0.8 L15.5 6.5 L21.5 6.5" fill="#fff" stroke="#767676" stroke-width="1.4"/><rect x="4" y="7.6" width="14" height="6.8" fill="url(#go)"/></svg>
<div class="t" style="left:590px;top:454px;font-size:14px;color:#000;letter-spacing:-0.35px">Uptrend Color</div>
<div class="a" style="left:873px;top:452px;width:16px;height:16px;background:#1e90ff;border:1px solid rgba(0,0,0,0.12)"></div>
<div class="t" style="left:891px;top:454px;font-size:14px;color:#000;">DodgerBlue</div>
<div class="a" style="left:562px;top:473px;width:613px;height:26px;background:#ebebeb"></div>
<div class="a" style="left:867px;top:473px;width:1px;height:26px;background:#d8d8d8"></div>
<svg class="a" style="left:563px;top:476px" width="23" height="23" viewBox="0 0 23 23"><defs><radialGradient id="go" cx="0.5" cy="0.5" r="0.6"><stop offset="0" stop-color="#ffef10"/><stop offset="1" stop-color="#ff8800"/></radialGradient></defs><path d="M1.5 2.8 Q1.5 0.8 3.5 0.8 L15.5 0.8 L21.5 6.5 L21.5 21 L19 20 L17 21.6 L14 20 L11 21.6 L8 20 L5 21.6 L1.5 20.5 Z" fill="#fafafa" stroke="#767676" stroke-width="1.4"/><path d="M15.5 0.8 L15.5 6.5 L21.5 6.5" fill="#fff" stroke="#767676" stroke-width="1.4"/><rect x="4" y="7.6" width="14" height="6.8" fill="url(#go)"/></svg>
<div class="t" style="left:590px;top:480px;font-size:14px;color:#000;letter-spacing:-0.35px">Downtrend Color</div>
<div class="a" style="left:873px;top:478px;width:16px;height:16px;background:#ff7f50;border:1px solid rgba(0,0,0,0.12)"></div>
<div class="t" style="left:891px;top:480px;font-size:14px;color:#000;">Coral</div>
<div class="a" style="left:562px;top:499px;width:613px;height:26px;background:#fff"></div>
<div class="a" style="left:867px;top:499px;width:1px;height:26px;background:#d8d8d8"></div>
<svg class="a" style="left:563px;top:502px" width="23" height="23" viewBox="0 0 23 23"><defs><linearGradient id="gg" x1="0" y1="0" x2="1" y2="1"><stop offset="0" stop-color="#b4f9b9"/><stop offset="1" stop-color="#5cd86d"/></linearGradient></defs><path d="M1.5 2.8 Q1.5 0.8 3.5 0.8 L15.5 0.8 L21.5 6.5 L21.5 21 L19 20 L17 21.6 L14 20 L11 21.6 L8 20 L5 21.6 L1.5 20.5 Z" fill="url(#gg)" stroke="#62cc72" stroke-width="1"/><path d="M15.5 0.8 L15.5 6.5 L21.5 6.5" fill="#8fe69a" stroke="#62cc72" stroke-width="1"/><path d="M4.6 13.3 L11.4 7.4" stroke="#07691a" stroke-width="2.2" stroke-linecap="round" fill="none"/><path d="M13.6 12.4 Q14.5 13.2 17.8 13.1" stroke="#07691a" stroke-width="2.2" stroke-linecap="round" fill="none"/></svg>
<div class="t" style="left:590px;top:506px;font-size:14px;color:#000;letter-spacing:-0.35px">Show Boxes</div>
<div class="t" style="left:872px;top:506px;font-size:14px;color:#000;">true</div>
<div class="a" style="left:562px;top:525px;width:613px;height:26px;background:#ebebeb"></div>
<div class="a" style="left:867px;top:525px;width:1px;height:26px;background:#d8d8d8"></div>
<svg class="a" style="left:563px;top:528px" width="23" height="23" viewBox="0 0 23 23"><defs><linearGradient id="gb" x1="0" y1="0" x2="1" y2="1"><stop offset="0" stop-color="#cde6fa"/><stop offset="1" stop-color="#7db6e6"/></linearGradient></defs><path d="M1.5 2.8 Q1.5 0.8 3.5 0.8 L15.5 0.8 L21.5 6.5 L21.5 21 L19 20 L17 21.6 L14 20 L11 21.6 L8 20 L5 21.6 L1.5 20.5 Z" fill="url(#gb)" stroke="#6aa2d4" stroke-width="1"/><path d="M15.5 0.8 L15.5 6.5 L21.5 6.5" fill="#e8f4fd" stroke="#6aa2d4" stroke-width="1"/><text transform="translate(3.8 15.2) scale(0.82 1)" font-family="Liberation Sans" font-weight="bold" font-size="9.5" fill="#0b2a52" stroke="#0b2a52" stroke-width="0.2">123</text></svg>
<div class="t" style="left:590px;top:532px;font-size:14px;color:#000;letter-spacing:-0.35px">Box Lines Width</div>
<div class="t" style="left:872px;top:532px;font-size:14px;color:#000;">2</div>
<div class="a" style="left:562px;top:551px;width:613px;height:26px;background:#fff"></div>
<div class="a" style="left:867px;top:551px;width:1px;height:26px;background:#d8d8d8"></div>
<svg class="a" style="left:563px;top:554px" width="23" height="23" viewBox="0 0 23 23"><defs><linearGradient id="gg" x1="0" y1="0" x2="1" y2="1"><stop offset="0" stop-color="#b4f9b9"/><stop offset="1" stop-color="#5cd86d"/></linearGradient></defs><path d="M1.5 2.8 Q1.5 0.8 3.5 0.8 L15.5 0.8 L21.5 6.5 L21.5 21 L19 20 L17 21.6 L14 20 L11 21.6 L8 20 L5 21.6 L1.5 20.5 Z" fill="url(#gg)" stroke="#62cc72" stroke-width="1"/><path d="M15.5 0.8 L15.5 6.5 L21.5 6.5" fill="#8fe69a" stroke="#62cc72" stroke-width="1"/><path d="M4.6 13.3 L11.4 7.4" stroke="#07691a" stroke-width="2.2" stroke-linecap="round" fill="none"/><path d="M13.6 12.4 Q14.5 13.2 17.8 13.1" stroke="#07691a" stroke-width="2.2" stroke-linecap="round" fill="none"/></svg>
<div class="t" style="left:590px;top:558px;font-size:14px;color:#000;letter-spacing:-0.35px">Show Channels</div>
<div class="t" style="left:872px;top:558px;font-size:14px;color:#000;">false</div>
<div class="a" style="left:562px;top:577px;width:613px;height:26px;background:#ebebeb"></div>
<div class="a" style="left:867px;top:577px;width:1px;height:26px;background:#d8d8d8"></div>
<svg class="a" style="left:563px;top:580px" width="23" height="23" viewBox="0 0 23 23"><defs><linearGradient id="gg" x1="0" y1="0" x2="1" y2="1"><stop offset="0" stop-color="#b4f9b9"/><stop offset="1" stop-color="#5cd86d"/></linearGradient></defs><path d="M1.5 2.8 Q1.5 0.8 3.5 0.8 L15.5 0.8 L21.5 6.5 L21.5 21 L19 20 L17 21.6 L14 20 L11 21.6 L8 20 L5 21.6 L1.5 20.5 Z" fill="url(#gg)" stroke="#62cc72" stroke-width="1"/><path d="M15.5 0.8 L15.5 6.5 L21.5 6.5" fill="#8fe69a" stroke="#62cc72" stroke-width="1"/><path d="M4.6 13.3 L11.4 7.4" stroke="#07691a" stroke-width="2.2" stroke-linecap="round" fill="none"/><path d="M13.6 12.4 Q14.5 13.2 17.8 13.1" stroke="#07691a" stroke-width="2.2" stroke-linecap="round" fill="none"/></svg>
<div class="t" style="left:590px;top:584px;font-size:14px;color:#000;letter-spacing:-0.35px">Show Pivot Points</div>
<div class="t" style="left:872px;top:584px;font-size:14px;color:#000;">true</div>
<div class="a" style="left:562px;top:603px;width:613px;height:26px;background:#fff"></div>
<div class="a" style="left:867px;top:603px;width:1px;height:26px;background:#d8d8d8"></div>
<svg class="a" style="left:563px;top:606px" width="23" height="23" viewBox="0 0 23 23"><defs><linearGradient id="gg" x1="0" y1="0" x2="1" y2="1"><stop offset="0" stop-color="#b4f9b9"/><stop offset="1" stop-color="#5cd86d"/></linearGradient></defs><path d="M1.5 2.8 Q1.5 0.8 3.5 0.8 L15.5 0.8 L21.5 6.5 L21.5 21 L19 20 L17 21.6 L14 20 L11 21.6 L8 20 L5 21.6 L1.5 20.5 Z" fill="url(#gg)" stroke="#62cc72" stroke-width="1"/><path d="M15.5 0.8 L15.5 6.5 L21.5 6.5" fill="#8fe69a" stroke="#62cc72" stroke-width="1"/><path d="M4.6 13.3 L11.4 7.4" stroke="#07691a" stroke-width="2.2" stroke-linecap="round" fill="none"/><path d="M13.6 12.4 Q14.5 13.2 17.8 13.1" stroke="#07691a" stroke-width="2.2" stroke-linecap="round" fill="none"/></svg>
<div class="t" style="left:590px;top:610px;font-size:14px;color:#000;letter-spacing:-0.35px">Show Ghost Boxes</div>
<div class="t" style="left:872px;top:610px;font-size:14px;color:#000;">false</div>
<div class="a" style="left:562px;top:629px;width:613px;height:26px;background:#ebebeb"></div>
<div class="a" style="left:867px;top:629px;width:1px;height:26px;background:#d8d8d8"></div>
<svg class="a" style="left:563px;top:632px" width="23" height="23" viewBox="0 0 23 23"><defs><linearGradient id="gg" x1="0" y1="0" x2="1" y2="1"><stop offset="0" stop-color="#b4f9b9"/><stop offset="1" stop-color="#5cd86d"/></linearGradient></defs><path d="M1.5 2.8 Q1.5 0.8 3.5 0.8 L15.5 0.8 L21.5 6.5 L21.5 21 L19 20 L17 21.6 L14 20 L11 21.6 L8 20 L5 21.6 L1.5 20.5 Z" fill="url(#gg)" stroke="#62cc72" stroke-width="1"/><path d="M15.5 0.8 L15.5 6.5 L21.5 6.5" fill="#8fe69a" stroke="#62cc72" stroke-width="1"/><path d="M4.6 13.3 L11.4 7.4" stroke="#07691a" stroke-width="2.2" stroke-linecap="round" fill="none"/><path d="M13.6 12.4 Q14.5 13.2 17.8 13.1" stroke="#07691a" stroke-width="2.2" stroke-linecap="round" fill="none"/></svg>
<div class="t" style="left:590px;top:636px;font-size:14px;color:#000;letter-spacing:-0.35px">Show Signals</div>
<div class="t" style="left:872px;top:636px;font-size:14px;color:#000;">true</div>
<div class="a" style="left:564px;top:368px;width:611px;height:1px;background:#d2d2d2"></div>
<div class="a" style="left:564px;top:394px;width:611px;height:1px;background:#d2d2d2"></div>
<div class="a" style="left:564px;top:420px;width:611px;height:1px;background:#d2d2d2"></div>
<div class="a" style="left:564px;top:447px;width:611px;height:1px;background:#d2d2d2"></div>
<div class="a" style="left:564px;top:473px;width:611px;height:1px;background:#d2d2d2"></div>
<div class="a" style="left:564px;top:499px;width:611px;height:1px;background:#d2d2d2"></div>
<div class="a" style="left:564px;top:525px;width:611px;height:1px;background:#d2d2d2"></div>
<div class="a" style="left:564px;top:551px;width:611px;height:1px;background:#d2d2d2"></div>
<div class="a" style="left:564px;top:577px;width:611px;height:1px;background:#d2d2d2"></div>
<div class="a" style="left:564px;top:603px;width:611px;height:1px;background:#d2d2d2"></div>
<div class="a" style="left:564px;top:629px;width:611px;height:1px;background:#d2d2d2"></div>
<div class="a" style="left:564px;top:655px;width:611px;height:1px;background:#d2d2d2"></div>
<div class="a" style="left:1188px;top:772px;width:138px;height:27px;background:#e1e1e1;border:1px solid #adadad"></div><div class="t" style="left:1188px;top:779px;width:138px;text-align:center;font-size:14px;color:#000">Load</div>
<div class="a" style="left:1188px;top:814px;width:138px;height:27px;background:#e1e1e1;border:1px solid #adadad"></div><div class="t" style="left:1188px;top:821px;width:138px;text-align:center;font-size:14px;color:#000">Save</div>
<div class="a" style="left:1018px;top:862px;width:98px;height:27px;background:#e1e1e1;border:2px solid #0078d7"></div><div class="t" style="left:1018px;top:869px;width:98px;text-align:center;font-size:14px;color:#000">OK</div>
<div class="a" style="left:1127px;top:862px;width:98px;height:27px;background:#e1e1e1;border:1px solid #adadad"></div><div class="t" style="left:1127px;top:869px;width:98px;text-align:center;font-size:14px;color:#000">Cancel</div>
<div class="a" style="left:1235px;top:862px;width:98px;height:27px;background:#e1e1e1;border:1px solid #adadad"></div><div class="t" style="left:1235px;top:869px;width:98px;text-align:center;font-size:14px;color:#000">Reset</div>
<svg class="a" style="left:1332px;top:890px" width="10" height="10"><g fill="#b8b8b8"><rect x="2" y="2" width="2" height="2"/><rect x="6" y="2" width="2" height="2"/><rect x="2" y="6" width="2" height="2"/><rect x="6" y="6" width="2" height="2"/></g></svg>
</body></html>
